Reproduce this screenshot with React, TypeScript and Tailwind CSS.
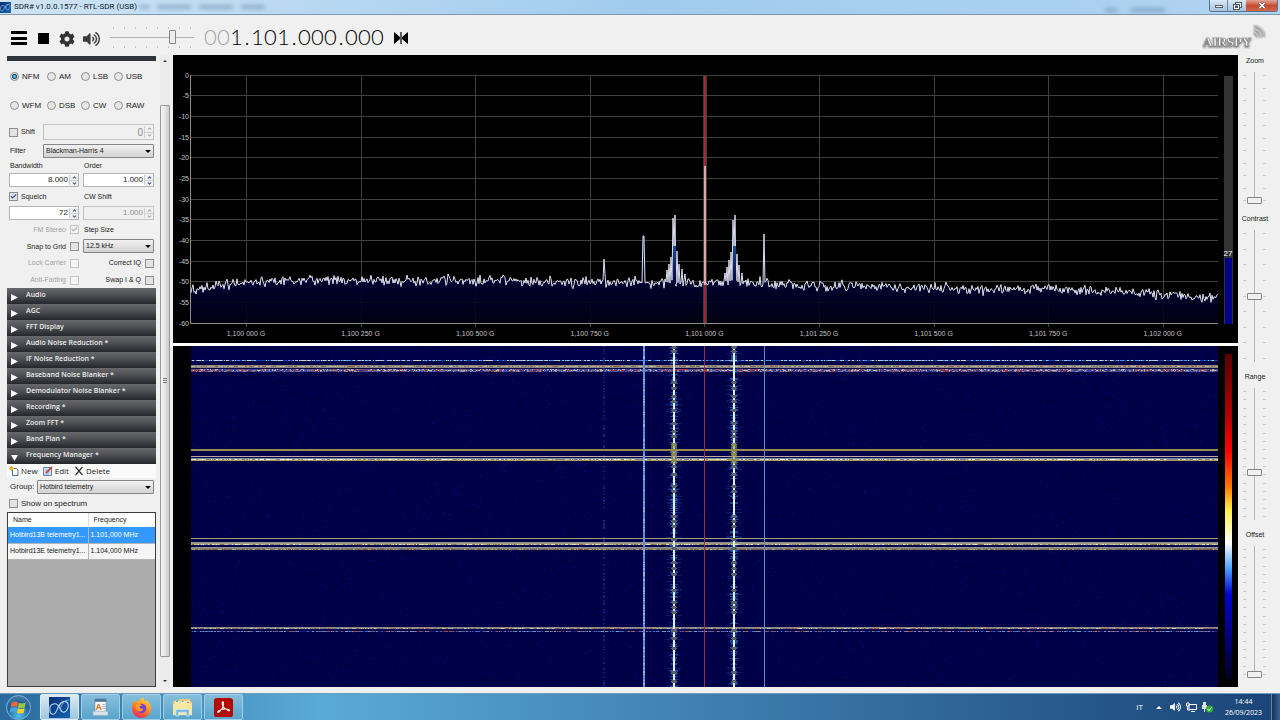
import { useState } from 'react'
import type { ReactNode } from 'react'
import { Check, ChevronDown, ChevronUp } from 'lucide-react'
import { FaCog, FaVolumeUp } from 'react-icons/fa'

// small seeded generator so the noise is stable between renders
const createRandom = (seed: number) => () => {
  seed = (seed * 1664525 + 1013904223) % 4294967296
  return seed / 4294967296
}

const PLOT_LEFT = 191
const PLOT_RIGHT = 1218
const CENTER = 705

const floorLevels = [
  [191, -51.8], [225, -50.6], [260, -50], [300, -49.5], [480, -49.6], [600, -50.1], [700, -50],
  [760, -50.3], [830, -50.9], [950, -51.6], [1050, -51.6], [1120, -52.2], [1180, -53.2], [1218, -54],
]

const peaks: Record<number, number> = {
  604: 259, 605: 274, 643: 236, 644: 236, 667: 270, 669: 264, 671: 257, 673: 218, 674: 246, 675: 215,
  677: 251, 679: 264, 682: 269, 685: 274, 725: 273, 727: 267, 729: 260, 731: 252, 733: 220, 734: 246,
  735: 215, 737: 254, 739: 265, 742: 273, 764: 234,
}

const dbToY = (db: number) => 75.5 - (db * 248) / 60

const floorAt = (x: number) => {
  const next = floorLevels.findIndex(([fx]) => fx >= x)
  if (next <= 0) return floorLevels[0][1]
  const [x0, y0] = floorLevels[next - 1]
  const [x1, y1] = floorLevels[next]
  return y0 + ((y1 - y0) * (x - x0)) / (x1 - x0)
}

const buildTrace = () => {
  const random = createRandom(41)
  const points: string[] = []
  for (let x = PLOT_LEFT; x <= PLOT_RIGHT; x++) {
    const noise = (random() + random() + random() - 1.5) * 5
    const y = peaks[x] ?? dbToY(floorAt(x)) + noise
    points.push(`${x},${y.toFixed(1)}`)
  }
  return points.join(' ')
}

const trace = buildTrace()

const buildDots = (count: number, seed: number) => {
  const random = createRandom(seed)
  let d = ''
  for (let i = 0; i < count; i++) {
    const x = PLOT_LEFT + Math.floor(random() * 1025)
    const y = 346 + Math.floor(random() * 341)
    d += `M${x} ${y + 0.5}h${1 + Math.floor(random() * 2)}`
  }
  return d
}

const buildDashes = (y: number, density: number, seed: number) => {
  const random = createRandom(seed)
  let d = ''
  for (let x = PLOT_LEFT; x < PLOT_RIGHT - 3; x++) {
    if (random() < density) d += `M${x} ${y}h${1 + Math.floor(random() * 2)}`
  }
  return d
}

const buildColumn = (x: number, spread: number, density: number, seed: number) => {
  const random = createRandom(seed)
  let d = ''
  for (let y = 346; y < 687; y++) {
    if (random() < density) {
      const half = 1 + Math.floor(random() * spread)
      d += `M${x - half} ${y + 0.5}h${half * 2}`
    }
  }
  return d
}

const dimDots = buildDots(22000, 7)
const brightDots = buildDots(2500, 19)

const solidBands = [
  { y: 365, h: 3, color: '#8b8678' },
  { y: 449, h: 2, color: '#918b4e' },
  { y: 456, h: 1, color: '#b5ad9c' },
  { y: 458, h: 1, color: '#7d88a8' },
  { y: 459, h: 2, color: '#a5a060' },
  { y: 538, h: 1, color: '#a49d72' },
  { y: 542, h: 1, color: '#8e9098' },
  { y: 543, h: 2, color: '#a39c77' },
  { y: 547, h: 1, color: '#8d92a0' },
  { y: 548, h: 2, color: '#857f69' },
  { y: 627, h: 2, color: '#8c8980' },
]

const noisyBands = [
  { y: 360, base: '#1a3fb0', tints: ['#9fc4f4', '#4f8ef0', '#d8d8b0'] },
  { y: 366, base: '#a9a284', tints: ['#6d7278', '#b8b8bc', '#8f5a46'] },
  { y: 369, base: '#48509a', tints: ['#a9a5b9', '#3148b0', '#b6414d'] },
  { y: 370, base: '#7a7490', tints: ['#b9c0a0', '#25359c', '#b03030'] },
  { y: 371, base: '#2c3488', tints: ['#8a86a0', '#3f5cc0', '#8c3844'] },
  { y: 459, base: '#d3cf87', tints: ['#ffffff', '#8a8a4c', '#6d7fa8'] },
  { y: 544, base: '#bcb589', tints: ['#e2dfc0', '#7e7048', '#8290b0'] },
  { y: 549, base: '#827f5c', tints: ['#b8b070', '#5a6688', '#9c4a3c'] },
  { y: 628, base: '#9a9484', tints: ['#c8c4b0', '#6470a8', '#b25444'] },
  { y: 631, base: '#14207a', tints: ['#8890b0', '#3a68c8', '#a84848'] },
]

const blobs = [
  347, 351, 382, 388, 396, 401, 410, 423, 431, 436, 444, 450, 454, 460, 466, 474, 486, 491, 516, 521,
  526, 539, 548, 562, 568, 574, 590, 602, 607, 612, 630, 638, 648, 672, 681,
]

const modes = ['NFM', 'AM', 'LSB', 'USB', 'WFM', 'DSB', 'CW', 'RAW']

const sections = [
  'Audio', 'AGC', 'FFT Display', 'Audio Noise Reduction *', 'IF Noise Reduction *',
  'Baseband Noise Blanker *', 'Demodulator Noise Blanker *', 'Recording *', 'Zoom FFT *', 'Band Plan *',
  'Frequency Manager *',
]

const stations = [
  { name: 'Hotbird13B telemetry1...', frequency: '1.101,000 MHz' },
  { name: 'Hotbird13E telemetry1...', frequency: '1.104,000 MHz' },
]

function WaveIcon({ className }: { className: string }) {
  return (
    <svg viewBox="0 0 24 24" className={className} aria-hidden="true">
      <defs>
        <linearGradient id="waveBg" x1="0" y1="0" x2="1" y2="1">
          <stop offset="0" stopColor="#0b2f74" />
          <stop offset="1" stopColor="#1463b4" />
        </linearGradient>
      </defs>
      <rect width="24" height="24" fill="url(#waveBg)" />
      <path d="M1 14C1 21 6 22 9 15S14 5 18 5s5 5 3 9-6 5-8 0-4-7-8-6-4 3-4 6z" fill="none" stroke="#b9dcf5" strokeWidth="1.2" />
      <path d="M13 14c1-5 4-10 10-11" fill="none" stroke="#7db6e4" strokeWidth="1" />
    </svg>
  )
}

function TitleBar() {
  return (
    <header className="flex h-[15px] shrink-0 items-start border-b border-[#7d97b0] bg-linear-to-r from-[#cfe4f4] via-[#a0cbee] to-[#b0d3f0] font-['Roboto','Open_Sans',sans-serif]">
      <WaveIcon className="mt-[2px] h-[11px] w-[11px]" />
      <h1 className="ml-[3px] mt-px text-[8px] leading-[12px] text-[#10202c]">SDR# v1.0.0.1577 - RTL-SDR (USB)</h1>
      <div className="mt-[5px] flex flex-1 gap-[8px] pl-[3px] opacity-50 blur-[2px]">
        <i className="h-[4px] w-[9px] bg-[#5c7f9f]" />
        <i className="h-[4px] w-[34px] bg-[#5c7f9f]" />
        <i className="h-[4px] w-[34px] bg-[#5c7f9f]" />
        <i className="h-[4px] w-[24px] bg-[#5c7f9f]" />
      </div>
      <div className="mt-[8px] flex gap-[14px] pr-[44px] opacity-50 blur-[2px]">
        <i className="h-[4px] w-[12px] bg-[#5c7f9f]" />
        <i className="h-[4px] w-[34px] bg-[#5c7f9f]" />
      </div>
      <div className="mr-[2px] flex h-[12px] overflow-hidden rounded-b-[3px] border border-t-0 border-[#5b728c]">
        <button aria-label="Minimize" className="flex w-[18px] items-center justify-center border-r border-[#6d86a0] bg-linear-to-b from-[#dbe9f5] to-[#a6c2dc]">
          <i className="mt-px h-[3px] w-[8px] border border-[#53606f] bg-white" />
        </button>
        <button aria-label="Restore" className="flex w-[18px] items-center justify-center bg-linear-to-b from-[#dbe9f5] to-[#a6c2dc]">
          <svg viewBox="0 0 9 8" className="h-[8px] w-[9px]" fill="#fff" stroke="#4c5866">
            <rect x="2.5" y=".5" width="6" height="5" />
            <rect x=".5" y="2.5" width="6" height="5" />
            <rect x="2.5" y="4" width="2" height="1.5" />
          </svg>
        </button>
        <button aria-label="Close" className="flex w-[31px] items-center justify-center bg-linear-to-b from-[#e3a595] via-[#c84a31] to-[#d0684c]">
          <svg viewBox="0 0 9 8" className="h-[7px] w-[8px]">
            <path d="M1.5 1l6 6M7.5 1l-6 6" stroke="#5a2a28" strokeWidth="3" />
            <path d="M1.5 1l6 6M7.5 1l-6 6" stroke="#fff" strokeWidth="2" />
          </svg>
        </button>
      </div>
    </header>
  )
}

function Ticks({ count, vertical = false }: { count: number; vertical?: boolean }) {
  return (
    <div className={vertical ? 'flex flex-col justify-between py-[3px]' : 'flex justify-between px-[3px]'}>
      {Array.from({ length: count }, (_, i) => (
        <i key={i} className={vertical ? 'h-px w-[3px] bg-[#cbcbcb]' : 'h-[2px] w-px bg-[#c6c6c6]'} />
      ))}
    </div>
  )
}

function Toolbar() {
  return (
    <div className="flex h-[40px] shrink-0 items-center pl-[11px] pr-[14px]">
      <button aria-label="Menu" className="mt-[6px] flex h-[14px] w-[16px] flex-col justify-between">
        <i className="h-[3px] w-full bg-black" />
        <i className="h-[3px] w-full bg-black" />
        <i className="h-[3px] w-full bg-black" />
      </button>
      <button aria-label="Stop" className="ml-[11px] mt-[7px] h-[11px] w-[11px] bg-black" />
      <button aria-label="Settings" className="ml-[10px] mt-[7px]">
        <FaCog className="h-[16px] w-[16px] text-[#333]" />
      </button>
      <button aria-label="Mute" className="ml-[8px] mt-[7px]">
        <FaVolumeUp className="h-[16px] w-[17px] text-[#3b3b3b]" />
      </button>
      <div className="ml-[10px] mt-[4px] w-[84px]">
        <Ticks count={8} />
        <input
          type="range"
          aria-label="Volume"
          defaultValue={76}
          className="my-px block h-[15px] w-full appearance-none bg-[linear-gradient(to_bottom,transparent_7px,#b4b4b4_7px,#b4b4b4_8px,transparent_8px)] [&::-webkit-slider-thumb]:h-[14px] [&::-webkit-slider-thumb]:w-[7px] [&::-webkit-slider-thumb]:appearance-none [&::-webkit-slider-thumb]:rounded-[1px] [&::-webkit-slider-thumb]:border [&::-webkit-slider-thumb]:border-[#858585] [&::-webkit-slider-thumb]:bg-[#ececec]"
        />
        <Ticks count={8} />
      </div>
      <div className="ml-[10px] mt-[4px] flex font-['Lato',sans-serif] text-[22px] font-light leading-[24px] text-black">
        {'001.101.000.000'.split('').map((char, i) => (
          <span key={i} className={`text-center ${char === '.' ? 'w-[8px]' : 'w-[13px]'} ${i < 2 ? 'text-[#a3a3a3]' : ''}`}>
            {char}
          </span>
        ))}
      </div>
      <button aria-label="Center tuning" className="ml-[10px] mt-[6px]">
        <svg viewBox="0 0 14 12" className="h-[12px] w-[14px]">
          <path d="M0 0l6 5V0h2v5l6-5v12L8 7v5H6V7l-6 5z" />
          <path d="M7 0v12" stroke="#f0f0f0" strokeWidth=".8" />
        </svg>
      </button>
      <svg viewBox="0 0 64 26" className="ml-auto mt-[2px] h-[26px] w-[64px]" role="img" aria-label="Airspy">
        <g className="[filter:drop-shadow(0_1px_1px_#444)]">
          <text x="1" y="23" fill="#fff" stroke="#8d8d8d" strokeWidth=".6" className="font-['Liberation_Serif',serif] text-[13px] font-bold">
            AIRSPY
          </text>
          <path d="M52 9.500a4.500 4.500 0 0 1 3.500 4M52 6a8 8 0 0 1 7 7.500M52 2.500a11.500 11.500 0 0 1 10.500 10.500" fill="none" stroke="#c4c4c4" strokeWidth="1.3" />
        </g>
      </svg>
    </div>
  )
}

function CheckBox({ label, checked = false, disabled = false, before = false }: { label: string; checked?: boolean; disabled?: boolean; before?: boolean }) {
  return (
    <label className={`flex items-center gap-[3px] whitespace-nowrap ${before ? 'flex-row-reverse gap-[4px]' : ''} ${disabled ? 'text-[#a0a0a0]' : ''}`}>
      <span className="grid">
        <input
          type="checkbox"
          defaultChecked={checked}
          disabled={disabled}
          className={`peer h-[9px] w-[9px] appearance-none border [grid-area:1/1] ${disabled ? 'border-[#c4c4c4] bg-[#f4f4f4]' : 'border-[#8e8f8f] bg-[#e3e3e3]'}`}
        />
        <Check strokeWidth={4} className={`invisible m-px h-[7px] w-[7px] [grid-area:1/1] peer-checked:visible ${disabled ? 'text-[#b0b0b0]' : 'text-[#3a4b96]'}`} />
      </span>
      {label}
    </label>
  )
}

function NumberBox({ label, value, disabled = false, tall = false }: { label: string; value: string; disabled?: boolean; tall?: boolean }) {
  return (
    <div className={`flex min-w-0 border ${tall ? 'h-[16px]' : 'h-[14px]'} ${disabled ? 'border-[#c4c4c4] bg-[#f0f0f0] text-[#8e8e8e]' : 'border-[#b3b5ba] bg-white'}`}>
      <input
        type="text"
        aria-label={label}
        defaultValue={value}
        disabled={disabled}
        className={`w-0 min-w-0 flex-1 pr-px text-right ${tall ? 'text-[10px]' : 'text-[8px]'}`}
      />
      <div className={`my-px flex w-[9px] flex-col border-l border-[#d0d0d0] ${disabled ? 'text-[#a8a8a8]' : 'text-[#3d5488]'}`}>
        <button aria-label={`${label} up`} disabled={disabled} className="flex flex-1 items-center justify-center border-b border-[#d0d0d0] bg-[#f0f0f0]">
          <ChevronUp strokeWidth={5} className="h-[5px] w-[5px]" />
        </button>
        <button aria-label={`${label} down`} disabled={disabled} className="flex flex-1 items-center justify-center bg-[#f0f0f0]">
          <ChevronDown strokeWidth={5} className="h-[5px] w-[5px]" />
        </button>
      </div>
    </div>
  )
}

function SelectBox({ id, label, value }: { id: string; label: string; value: string }) {
  return (
    <div className="relative min-w-0 flex-1">
      <select
        id={id}
        aria-label={label}
        className="block h-[14px] w-full appearance-none rounded-[1px] border border-[#858585] bg-linear-to-b from-[#f2f2f2] to-[#d2d2d2] pl-[2px] text-[7px] leading-[12px]"
      >
        <option>{value}</option>
      </select>
      <i className="pointer-events-none absolute right-[3px] top-[6px] border-x-[3px] border-t-[3px] border-x-transparent border-t-black" />
    </div>
  )
}

function RadioPanel() {
  const [mode, setMode] = useState('NFM')

  return (
    <div className="px-[2px]">
      <div className="grid grid-cols-[37px_34px_33px_1fr] pl-px pt-px">
        {modes.map((name) => (
          <label key={name} className="flex h-[29px] items-center gap-[3px] text-[8px]">
            <input
              type="radio"
              name="mode"
              checked={mode === name}
              onChange={() => setMode(name)}
              className="h-[9px] w-[9px] appearance-none rounded-full border border-[#8c8e90] bg-[#e6e6e6] checked:bg-[radial-gradient(#62c4ee_15%,#14506f_45%,#e6e6e6_60%)]"
            />
            {name}
          </label>
        ))}
      </div>
      <div className="mt-[4px] grid h-[16px] grid-cols-[34px_1fr] items-center">
        <CheckBox label="Shift" />
        <NumberBox label="Shift frequency" value="0" disabled tall />
      </div>
      <div className="mt-[4px] flex h-[14px] items-center">
        <label htmlFor="filter" className="w-[34px] pl-px">Filter</label>
        <SelectBox id="filter" label="Filter" value="Blackman-Harris 4" />
      </div>
      <div className="grid grid-cols-[70px_1fr] gap-x-[4px]">
        <span className="pl-px leading-[15px]">Bandwidth</span>
        <span className="pl-px leading-[15px]">Order</span>
        <NumberBox label="Bandwidth" value="8.000" />
        <NumberBox label="Order" value="1.000" />
        <div className="flex h-[19px] items-center"><CheckBox label="Squelch" checked /></div>
        <span className="pl-px leading-[19px]">CW Shift</span>
        <NumberBox label="Squelch" value="72" />
        <NumberBox label="CW Shift" value="1.000" disabled />
      </div>
      <div className="grid grid-cols-[70px_1fr] gap-x-[4px]">
        <div className="flex h-[19px] items-center justify-end"><CheckBox label="FM Stereo" checked disabled before /></div>
        <label htmlFor="step" className="pl-px leading-[19px]">Step Size</label>
        <div className="flex h-[15px] items-center justify-end"><CheckBox label="Snap to Grid" before /></div>
        <div className="flex"><SelectBox id="step" label="Step Size" value="12.5 kHz" /></div>
        <div className="flex h-[18px] items-center justify-end"><CheckBox label="Lock Carrier" disabled before /></div>
        <div className="flex items-center justify-end"><CheckBox label="Correct IQ" before /></div>
        <div className="flex h-[16px] items-center justify-end"><CheckBox label="Anti-Fading" disabled before /></div>
        <div className="flex items-center justify-end"><CheckBox label="Swap I & Q" before /></div>
      </div>
    </div>
  )
}

function ManagerButton({ label, children }: { label: string; children: ReactNode }) {
  return (
    <button className="flex items-center gap-[2px] text-[8px] leading-[14px]">
      <svg viewBox="0 0 10 10" className="h-[10px] w-[10px]" aria-hidden="true">{children}</svg>
      {label}
    </button>
  )
}

function FrequencyManager() {
  const [selected, setSelected] = useState(0)

  return (
    <div className="flex min-h-0 flex-1 flex-col">
      <div className="flex h-[14px] items-center gap-[5px] bg-[#fafafa] pl-[2px] font-['Open_Sans','Noto_Sans',sans-serif]">
        <ManagerButton label="New">
          <path d="M3.5 2.5h4l1.500 1.500v5.500H3.500z" fill="#fff" stroke="#51709a" />
          <path d="M2.500 0v5M0 2.500h5M1 1l3 3M4 1L1 4" stroke="#f0ac1c" />
        </ManagerButton>
        <ManagerButton label="Edit">
          <path d="M.5 1.500h8v8h-8z" fill="#dbe8f8" stroke="#5b82b8" />
          <path d="M2 4h5M2 6h5M2 8h4" stroke="#7099cc" strokeWidth=".7" />
          <path d="M3 7l6-6" stroke="#c84e36" strokeWidth="1.800" />
        </ManagerButton>
        <ManagerButton label="Delete">
          <path d="M1.500 1l7 8M8.500 1l-7 8" stroke="#333" strokeWidth="1.200" />
        </ManagerButton>
      </div>
      <div className="flex h-[17px] items-center px-[2px]">
        <label htmlFor="group" className="w-[28px] pl-px text-[8px]">Group:</label>
        <SelectBox id="group" label="Group" value="Hotbird telemetry" />
      </div>
      <div className="flex h-[17px] items-center pl-[2px] text-[8px]"><CheckBox label="Show on spectrum" /></div>
      <div className="min-h-0 flex-1 border border-[#3c3c3c] bg-[#ababab]">
        <table className="w-full table-fixed border-collapse whitespace-nowrap text-left text-[7px]">
          <thead>
            <tr className="h-[14px] bg-white">
              <th className="w-[80px] border-r border-[#dcdcdc] pl-[5px] font-normal">Name</th>
              <th className="pl-[5px] font-normal">Frequency</th>
            </tr>
          </thead>
          <tbody>
            {stations.map((station, i) => (
              <tr
                key={station.name}
                onClick={() => setSelected(i)}
                className={`h-[16px] border-b border-[#b5b5b5] ${i === selected ? 'bg-[#3399ff] text-white' : 'bg-[#f5f5f5]'}`}
              >
                <td className="border-r border-[#b5b5b5] pl-[2px]">{station.name}</td>
                <td className="pl-[2px]">{station.frequency}</td>
              </tr>
            ))}
          </tbody>
        </table>
      </div>
    </div>
  )
}

function SidePanel() {
  return (
    <aside className="flex w-[173px] shrink-0 pl-[7px]">
      <div className="flex w-[149px] flex-col">
        <div className="mt-px h-[5px] shrink-0 bg-[#30343b]" />
        <RadioPanel />
        <div className="font-['Open_Sans','Noto_Sans',sans-serif]">
          {sections.map((title, i) => (
            <button key={title} className="flex h-[16px] w-full items-center bg-linear-to-b from-[#68696c] via-[#4a4c50] to-[#24272c] text-[7px] font-semibold text-[#ececec]">
              <svg viewBox="0 0 8 8" className="ml-[4px] mr-[8px] mt-[2px] h-[7px] w-[7px]" fill="#fff">
                <path d={i === sections.length - 1 ? 'M0 1h8L4 8z' : 'M0 0l8 4-8 4z'} />
              </svg>
              <span className="pb-[2px]">{title}</span>
            </button>
          ))}
        </div>
        <FrequencyManager />
      </div>
      <div className="ml-[4px] flex w-[10px] flex-col items-center bg-[#ececec]">
        <i className="my-[5px] border-x-[2px] border-b-[2px] border-x-transparent border-b-[#333]" />
        <div className="flex-[38]" />
        <div className="flex w-full flex-[552] flex-col items-center justify-center gap-px rounded-[1px] border border-[#98999c] bg-linear-to-r from-[#f6f6f6] via-[#e6e6e8] to-[#c9cacd]">
          <i className="h-px w-[4px] bg-[#777]" />
          <i className="h-px w-[4px] bg-[#777]" />
          <i className="h-px w-[4px] bg-[#777]" />
        </div>
        <div className="flex-[18]" />
        <i className="my-[5px] border-x-[2px] border-t-[2px] border-x-transparent border-t-[#333]" />
      </div>
    </aside>
  )
}

function Spectrum() {
  const levels = Array.from({ length: 13 }, (_, i) => -5 * i)
  const marks = ['1,100 000 G', '1,100 250 G', '1,100 500 G', '1,100 750 G', '1,101 000 G', '1,101 250 G', '1,101 500 G', '1,101 750 G', '1,102 000 G']
  const markX = (i: number) => 246 + i * 114.6

  return (
    <svg viewBox="173 55 1065 288" preserveAspectRatio="none" className="block h-full w-full bg-black text-[7px]" role="img" aria-label="Spectrum">
      <defs>
        <linearGradient id="floorFill" gradientUnits="userSpaceOnUse" x1="0" y1="240" x2="0" y2="323">
          <stop offset="0" stopColor="#10408c" />
          <stop offset=".4" stopColor="#00003a" />
          <stop offset="1" stopColor="#000014" />
        </linearGradient>
        <linearGradient id="peakFill" x1="0" y1="0" x2="0" y2="1">
          <stop offset="0" stopColor="#1a4c94" />
          <stop offset="1" stopColor="#00003a" />
        </linearGradient>
      </defs>
      {levels.map((db) => (
        <g key={db}>
          <path d={`M190 ${Math.round(dbToY(db)) - 0.5}H1218`} stroke="#404040" />
          <text x="189" y={dbToY(db) + 2} textAnchor="end" fill="#c4c4c4">{db}</text>
        </g>
      ))}
      {marks.map((mark, i) => (
        <g key={mark}>
          <path d={`M${Math.round(markX(i)) + 0.5} 75V327`} stroke="#404040" />
          <text x={markX(i)} y="336" textAnchor="middle" fill="#c4c4c4">{mark}</text>
        </g>
      ))}
      <polygon points={`191,323 ${trace} 1218,323`} fill="url(#floorFill)" fillOpacity=".9" />
      <path d="M190.5 75V323.500H1218" fill="none" stroke="#8c8c8c" />
      <rect x="703" y="76" width="4" height="247" fill="#777" fillOpacity=".5" />
      <path d={`M${CENTER} 76V323`} stroke="#b8202a" strokeWidth="1.500" />
      <polyline points={trace} fill="none" stroke="#dfe0ee" strokeWidth="1" />
      <rect x="673" y="246" width="3" height="38" fill="url(#peakFill)" />
      <rect x="733" y="246" width="3" height="38" fill="url(#peakFill)" />
      <path d={`M${CENTER} 166V285`} stroke="#f3cfd2" strokeWidth="1.500" />
      <rect x="1224" y="76" width="9" height="248" fill="#333" />
      <rect x="1225" y="258" width="7" height="66" fill="#00008b" />
      <text x="1228" y="256" textAnchor="middle" fill="#fff" className="text-[8px]">27</text>
    </svg>
  )
}

function Waterfall() {
  return (
    <svg viewBox="173 346 1065 341" preserveAspectRatio="none" shapeRendering="crispEdges" className="block h-full w-full bg-black" role="img" aria-label="Waterfall">
      <defs>
        <linearGradient id="palette" x1="0" y1="0" x2="0" y2="1">
          <stop offset="0" stopColor="#5a0000" />
          <stop offset=".18" stopColor="#a80000" />
          <stop offset=".3" stopColor="#ff0000" />
          <stop offset=".41" stopColor="#ff7b00" />
          <stop offset=".48" stopColor="#ffee44" />
          <stop offset=".58" stopColor="#ffffff" />
          <stop offset=".66" stopColor="#4aa0ff" />
          <stop offset=".74" stopColor="#0000d0" />
          <stop offset=".86" stopColor="#000080" />
          <stop offset="1" stopColor="#000020" />
        </linearGradient>
      </defs>
      <rect x="191" y="346" width="1027" height="341" fill="#000046" />
      <path d={dimDots} stroke="#000056" />
      <path d={brightDots} stroke="#04046c" />

      <path d={buildColumn(604, 1, 0.4, 3)} stroke="#2444a4" strokeOpacity=".5" />
      {[674, 734].map((x) => (
        <g key={x}>
          <path d={buildColumn(x, 8, 0.35, x)} stroke="#1c3a98" strokeOpacity=".45" />
          <path d={buildColumn(x, 4, 0.6, x + 9)} stroke="#2f68b8" strokeOpacity=".7" />
        </g>
      ))}

      {solidBands.map((band) => (
        <rect key={band.y} x="191" y={band.y} width="1027" height={band.h} fill={band.color} />
      ))}
      {noisyBands.map((band) => (
        <g key={band.y} strokeWidth="1">
          <path d={`M191 ${band.y + 0.5}H1218`} stroke={band.base} />
          {band.tints.map((tint, i) => (
            <path key={tint} d={buildDashes(band.y + 0.5, 0.3 - i * 0.08, band.y + i * 50)} stroke={tint} />
          ))}
        </g>
      ))}

      <path d="M644 346V687" stroke="#5f8cd8" strokeWidth="2" />
      <path d={buildColumn(644, 1, 0.3, 55)} stroke="#86b2ea" />
      <path d="M764.500 346V687" stroke="#5c8ccc" />
      {[674, 734].map((x) => (
        <g key={x}>
          <path d={`M${x} 346V687`} stroke="#d8f0fa" strokeWidth="2" />
          {blobs.map((y) => (
            <path key={y} d={`M${x - 3} ${y + 0.5}h6M${x - 2} ${y - 0.5}h4M${x - 2} ${y + 1.5}h4`} stroke={y > 440 && y < 462 ? '#85865c' : '#59636a'} />
          ))}
          <path d={`M${x} 444V464`} stroke="#8f9050" strokeWidth="6" strokeOpacity=".6" />
        </g>
      ))}
      <path d="M704.500 346V687" stroke="#9c2c42" />
      <rect x="1225" y="354" width="7" height="325" fill="url(#palette)" />
    </svg>
  )
}

function SideSlider({ label, value, ticks }: { label: string; value: number; ticks: number }) {
  const id = label.toLowerCase()
  return (
    <div className="flex min-h-0 flex-1 flex-col items-center pb-[9px] pr-[9px]">
      <label htmlFor={id} className="mb-[5px] pl-px leading-[12px]">{label}</label>
      <div className="flex min-h-0 flex-1 gap-px">
        <Ticks count={ticks} vertical />
        <input
          id={id}
          type="range"
          defaultValue={value}
          className="h-full w-[15px] appearance-none bg-[linear-gradient(to_right,transparent_7px,#b4b4b4_7px,#b4b4b4_8px,transparent_8px)] [direction:rtl] [writing-mode:vertical-lr] [&::-webkit-slider-thumb]:h-[7px] [&::-webkit-slider-thumb]:w-[15px] [&::-webkit-slider-thumb]:appearance-none [&::-webkit-slider-thumb]:rounded-[1px] [&::-webkit-slider-thumb]:border [&::-webkit-slider-thumb]:border-[#858585] [&::-webkit-slider-thumb]:bg-[#f0f0f0]"
        />
        <Ticks count={ticks} vertical />
      </div>
    </div>
  )
}

function TaskButton({ label, active = false, children }: { label: string; active?: boolean; children: ReactNode }) {
  return (
    <button
      aria-label={label}
      className={`flex h-[26px] w-[39px] items-center justify-center rounded-[2px] border ${active ? 'border-[#dcecf6] bg-linear-to-b from-[#dcebf5] to-[#9cc6e0]' : 'border-[#9fd0e8] bg-linear-to-b from-[#86bedc] to-[#58a4cc]'}`}
    >
      {children}
    </button>
  )
}

function Taskbar() {
  return (
    <footer className="flex h-[27px] shrink-0 items-center border-t border-[#6d9cc0] bg-linear-to-r from-[#2a6a9e] via-[#5aaad6] via-25% to-[#1b4478] font-['Open_Sans','Noto_Sans',sans-serif] text-white">
      <button aria-label="Start" className="mx-[6px] flex h-[25px] w-[25px] items-center justify-center rounded-full border border-[#7db4d6] bg-[radial-gradient(circle_at_50%_85%,#4fc0ea,#1f5f98_55%,#5a87aa)]">
        <svg viewBox="0 0 16 16" className="h-[17px] w-[17px]">
          <path d="M1.500 3.500Q5 1.500 7.500 3.200L6.700 7.500Q4 6 .7 7.700z" fill="#ee6a35" />
          <path d="M8.300 3.600Q11 5 14.800 3.300L14 7.700Q11 9.300 7.500 7.900z" fill="#94c83d" />
          <path d="M.5 8.500Q4 6.900 6.600 8.400L5.800 12.500Q3 11-.2 12.800z" fill="#4aa5e0" />
          <path d="M7.400 8.800Q10.500 10.300 13.800 8.600L13 13Q10 14.500 6.600 13z" fill="#fbcf2e" />
        </svg>
      </button>
      <div className="ml-[3px] flex gap-[2px]">
        <TaskButton label="SDR#" active>
          <WaveIcon className="h-[21px] w-[21px]" />
        </TaskButton>
        <TaskButton label="WordPad">
          <svg viewBox="0 0 18 20" className="h-[19px] w-[17px]">
            <path d="M3 1h12v15H3z" fill="#f4f8fb" stroke="#5b7f9f" strokeWidth=".7" />
            <path d="M3 1h12v3H3z" fill="#52779b" />
            <text x="4" y="12.500" fill="#e8731c" className="text-[9px] font-bold">A</text>
            <path d="M11 7h3M11 9h3M11 11h3" stroke="#7fa0bd" strokeWidth=".8" />
            <path d="M1 14h16v4.500H1z" fill="#d9e2ea" stroke="#8ba0b3" strokeWidth=".6" />
          </svg>
        </TaskButton>
        <TaskButton label="Firefox">
          <svg viewBox="0 0 22 22" className="h-[21px] w-[21px]">
            <defs>
              <linearGradient id="fox" x1=".8" y1="0" x2=".3" y2="1">
                <stop offset="0" stopColor="#ffe040" />
                <stop offset=".5" stopColor="#ff8a1c" />
                <stop offset="1" stopColor="#f3245c" />
              </linearGradient>
            </defs>
            <path d="M4 4q1 1 3 1Q9 2 13 .5q0 3 3 4.500 0-1 0-2 5 4 5 9.500a10 9.500 0 0 1-20 0Q1 7 4 4z" fill="url(#fox)" />
            <circle cx="11" cy="12" r="5" fill="#7341d8" />
            <path d="M5 8q4-2 7 1-3 0-3 2 1 2 4 1-1 4-5 3-4-2-3-7z" fill="#ff9a1e" />
          </svg>
        </TaskButton>
        <TaskButton label="Explorer">
          <svg viewBox="0 0 22 20" className="h-[19px] w-[21px]">
            <path d="M1 3h6l1-2h11v3h2v14H1z" fill="#e9cd72" />
            <path d="M3 3h5v3H3zM9 3h5v3H9zM15 3h4v3h-4z" fill="#f8f4dc" />
            <path d="M4 3h2v1H4zM10 3h2v1h-2z" fill="#3d9c4c" />
            <path d="M16 4h2v1h-2z" fill="#d44a3a" />
            <path d="M1 6h20v12H1z" fill="#f7e6a0" />
            <path d="M4 19v-6q0-1 1-1h12q1 0 1 1v6h-3v-4H7v4z" fill="#72b9e4" stroke="#d8eefa" strokeWidth=".7" />
          </svg>
        </TaskButton>
        <TaskButton label="Acrobat Reader">
          <svg viewBox="0 0 20 20" className="h-[19px] w-[19px]">
            <rect width="20" height="20" rx="3" fill="#b30b00" />
            <path d="M4 15.500q-1-1.500 4-3.500 2.500-4 2-7.500-1-1.500-1.500.5 0 4 3.500 6.500 4 0 4.500 1.500-.5 1.500-4-1.500-2.500-.3-5 .7-2 3.500-3.500 3.300z" fill="none" stroke="#fff" strokeWidth="1.100" />
          </svg>
        </TaskButton>
      </div>
      <span className="ml-auto text-[8px]">IT</span>
      <i className="ml-[13px] mr-[8px] border-x-[3px] border-b-[3px] border-x-transparent border-b-white" />
      <div className="flex items-center gap-[5px]">
        <FaVolumeUp className="h-[10px] w-[11px]" />
        <svg viewBox="0 0 11 10" className="h-[10px] w-[11px]" fill="none" stroke="#fff">
          <path d="M3 2.500h7.500v5H3zM5 9.500h4" />
          <path d="M.5 1h2.500v3H.5zM1.500 4v4H4" />
        </svg>
        <svg viewBox="0 0 11 11" className="h-[11px] w-[11px]">
          <path d="M1 0h3v3h1v4H3v3H2V7H0V3h1z" fill="#dbe2e8" />
          <circle cx="7.500" cy="7" r="3.500" fill="#2db52f" />
          <path d="M5.500 7l1.500 1.500L9.500 5.500" fill="none" stroke="#fff" />
        </svg>
      </div>
      <div className="ml-[8px] w-[45px] text-center text-[7px] leading-[11px]">
        <p>14:44</p>
        <p>26/09/2023</p>
      </div>
      <button aria-label="Show desktop" className="ml-[5px] h-full w-[9px] border-l border-[#5d86ae] bg-linear-to-r from-[#16335c] to-[#3c6594]" />
    </footer>
  )
}

export default function App() {
  return (
    <div className="flex h-screen flex-col overflow-hidden bg-[#f0f0f0] font-['Liberation_Sans',Arial,sans-serif] text-[7px] leading-[10px] text-[#1a1a1a]">
      <TitleBar />
      <Toolbar />
      <main className="mb-[6px] flex min-h-0 flex-1">
        <SidePanel />
        <section className="flex min-w-0 flex-1 flex-col gap-[3px] bg-white">
          <div className="min-h-0 flex-[288]"><Spectrum /></div>
          <div className="min-h-0 flex-[341]"><Waterfall /></div>
        </section>
        <div className="flex w-[42px] shrink-0 flex-col">
          <SideSlider label="Zoom" value={0} ticks={11} />
          <SideSlider label="Contrast" value={50} ticks={9} />
          <SideSlider label="Range" value={35} ticks={16} />
          <SideSlider label="Offset" value={0} ticks={16} />
        </div>
      </main>
      <Taskbar />
    </div>
  )
}
